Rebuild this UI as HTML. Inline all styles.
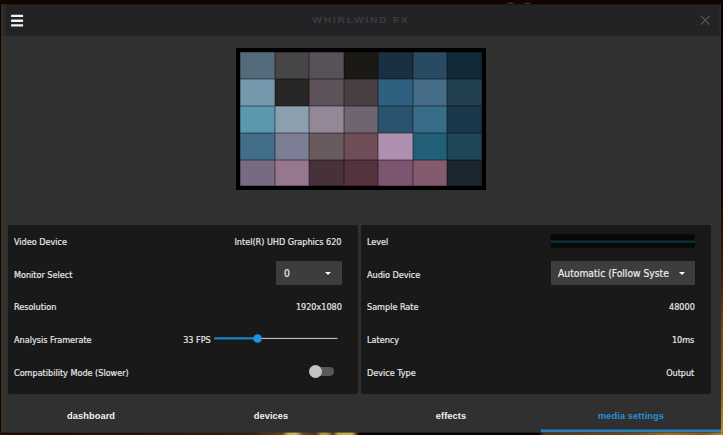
<!DOCTYPE html>
<html>
<head>
<meta charset="utf-8">
<title>Whirlwind FX</title>
<style>
html,body{margin:0;padding:0;}
body{width:723px;height:435px;overflow:hidden;background:#130500;position:relative;
  font-family:"DejaVu Sans Condensed","DejaVu Sans","Liberation Sans",sans-serif;font-stretch:condensed;font-size:9.4px;color:#e8e8e8;}
.abs{position:absolute;}
#wall-left{left:0;top:0;width:2px;height:435px;background:#0b0601;}
#wall-right{left:721px;top:0;width:2px;height:435px;background:linear-gradient(to bottom,#0f0300 0px,#140600 190px,#3a1a06 270px,#7a420e 330px,#96601a 395px,#c0902e 435px);}
#wall-bottom{left:0;top:432px;width:723px;height:3px;background:linear-gradient(to right,#2a0e05 0px,#1e0c05 30px,#2a140a 140px,#34200e 250px,#5a3210 270px,#6a3c12 282px,#c9a648 288px,#d8b850 296px,#70401a 303px,#5a3414 316px,#c09a40 322px,#b08a38 328px,#5a3010 333px,#c8a448 338px,#d0ac4c 352px,#4a2a10 357px,#0c0402 359px,#0c0402 538px,#5a3414 545px,#6e461a 630px,#a8681a 670px,#8a5218 705px,#b88428 723px);}
#win{left:1px;top:4px;width:720px;height:428px;background:#303030;overflow:hidden;}
#hdr{left:0;top:0;width:100%;height:31.7px;background:#232325;}
.bar{position:absolute;left:10px;width:12px;height:2.5px;background:#f4f4f4;border-radius:.5px;}
#title{left:0;width:100%;top:10px;text-align:center;font-family:"Liberation Sans",sans-serif;font-weight:bold;font-size:9px;letter-spacing:1.6px;transform:scaleX(1.13);color:#3c3c40;line-height:12px;}
#grid{left:235px;top:44.4px;width:242px;height:134px;border:4px solid #000;background:#000;display:grid;grid-template-columns:repeat(7,1fr);grid-template-rows:repeat(5,1fr);}
#grid div{box-shadow:inset 0 0 0 .5px rgba(0,0,0,.5);}
.panel{position:absolute;top:221px;width:350px;height:169px;background:#191919;border-radius:2px;}
.lbl,.val,.dd span{-webkit-text-stroke:.2px #e8e8e8;}
.lbl{position:absolute;left:6.3px;white-space:nowrap;line-height:12px;transform:scaleX(.96);transform-origin:left center;}
.val{position:absolute;right:16.3px;white-space:nowrap;line-height:12px;transform:scaleX(.96);transform-origin:right center;text-align:right;}
.dd{position:absolute;background:#3d3d3d;height:23.6px;border-radius:1px;}
.dd span{position:absolute;left:7.6px;top:4.8px;line-height:14px;font-size:10.5px;white-space:nowrap;transform:scaleX(.975);transform-origin:left center;color:#f0f0f0;}
.dd i{position:absolute;top:10.6px;width:0;height:0;border-left:3.7px solid transparent;border-right:3.7px solid transparent;border-top:3.8px solid #fff;}
.tab{position:absolute;top:406px;width:180px;text-align:center;transform:scaleX(1.05);font-family:"Liberation Sans",sans-serif;font-weight:bold;font-size:8.8px;line-height:12px;color:#f2f2f2;letter-spacing:.1px;}
</style>
</head>
<body>
<div id="wall-left" class="abs"></div>
<div class="abs" style="left:506px;top:2px;width:9px;height:3px;background:radial-gradient(ellipse at center,#5a342c 0%,rgba(90,52,44,0) 75%)"></div>
<div class="abs" style="left:523px;top:2px;width:9px;height:3px;background:radial-gradient(ellipse at center,#5a342c 0%,rgba(90,52,44,0) 75%)"></div>
<div id="wall-right" class="abs"></div>
<div id="wall-bottom" class="abs"></div>
<div class="abs" style="left:1px;top:432px;width:720px;height:1px;background:rgba(48,48,48,.6)"></div>
<div class="abs" style="left:541px;top:432px;width:180px;height:1px;background:rgba(42,127,182,.2)"></div>
<div id="win" class="abs">
  <div id="hdr" class="abs">
    <svg class="abs" style="left:8px;top:8px" width="18" height="18" viewBox="0 0 18 18"><rect x="2.1" y="2.7" width="12" height="2.4" rx=".4" fill="#f4f4f4"/><rect x="2.1" y="7.5" width="12" height="2.4" rx=".4" fill="#f4f4f4"/><rect x="2.1" y="12.2" width="12" height="2.4" rx=".4" fill="#f4f4f4"/></svg>
    <div class="abs" style="left:0;top:0;width:100%;height:1px;background:rgba(19,5,0,.45)"></div>
    <div id="title" class="abs">WHIRLWIND FX</div>
    <svg class="abs" style="left:699.2px;top:11.4px" width="10.5" height="10.5" viewBox="0 0 12 12"><path d="M1 1 L11 11 M11 1 L1 11" stroke="#545456" stroke-width="1.6" fill="none"/></svg>
  </div>

  <div id="grid" class="abs">
    <div style="background:#536b7b"></div><div style="background:#474546"></div><div style="background:#57525a"></div><div style="background:#1a1915"></div><div style="background:#1a2f40"></div><div style="background:#284b63"></div><div style="background:#122a38"></div>
    <div style="background:#7499ad"></div><div style="background:#282726"></div><div style="background:#5e525a"></div><div style="background:#4a4043"></div><div style="background:#2f607f"></div><div style="background:#456d88"></div><div style="background:#224050"></div>
    <div style="background:#5b98ad"></div><div style="background:#8c9fae"></div><div style="background:#948898"></div><div style="background:#6f6571"></div><div style="background:#29536f"></div><div style="background:#386c88"></div><div style="background:#1a384b"></div>
    <div style="background:#416e88"></div><div style="background:#7b7e95"></div><div style="background:#695a5d"></div><div style="background:#6e4d57"></div><div style="background:#af8fb0"></div><div style="background:#22607a"></div><div style="background:#1f4558"></div>
    <div style="background:#786a80"></div><div style="background:#977790"></div><div style="background:#47313a"></div><div style="background:#54333d"></div><div style="background:#7c5570"></div><div style="background:#845a6e"></div><div style="background:#1c262f"></div>
  </div>

  <div class="panel" style="left:7px">
    <div class="lbl" style="top:11.2px">Video Device</div>
    <div class="val" style="top:11.2px">Intel(R) UHD Graphics 620</div>
    <div class="lbl" style="top:43.8px">Monitor Select</div>
    <div class="dd" style="left:268px;top:36.2px;width:66px"><span>0</span><i style="left:49.4px"></i></div>
    <div class="lbl" style="top:76.4px">Resolution</div>
    <div class="val" style="top:76.4px">1920x1080</div>
    <div class="lbl" style="top:109px">Analysis Framerate</div>
    <div class="val" style="top:109px;right:147px">33 FPS</div>
    <svg class="abs" style="left:200px;top:107px" width="140" height="13" viewBox="0 0 140 13"><rect x="6.4" y="5.9" width="123.1" height="1" fill="#d4d4d4"/><rect x="6.4" y="5.3" width="43" height="2.2" fill="#1583c8"/><circle cx="49.6" cy="6.5" r="4.3" fill="#1b96e4"/></svg>
    <div class="lbl" style="top:141.6px">Compatibility Mode (Slower)</div>
    <div class="abs" style="left:304px;top:142px;width:22px;height:8.5px;border-radius:4.25px;background:#585858"></div>
    <div class="abs" style="left:301px;top:139.7px;width:13px;height:13px;border-radius:50%;background:#c4c4c4"></div>
  </div>

  <div class="panel" style="left:360px">
    <div class="lbl" style="top:11.2px">Level</div>
    <svg class="abs" style="left:189px;top:8px" width="147" height="17" viewBox="0 0 147 17"><rect x=".5" y="1.4" width="144.4" height="13.3" fill="#070909"/><rect x=".5" y="7.5" width="144.4" height="2.3" fill="#12313f"/></svg>
    <div class="lbl" style="top:43.8px">Audio Device</div>
    <div class="dd" style="left:189.5px;top:36.2px;width:144.3px"><span>Automatic (Follow Syste</span><i style="left:128.4px"></i></div>
    <div class="lbl" style="top:76.4px">Sample Rate</div>
    <div class="val" style="top:76.4px">48000</div>
    <div class="lbl" style="top:109px">Latency</div>
    <div class="val" style="top:109px">10ms</div>
    <div class="lbl" style="top:141.6px">Device Type</div>
    <div class="val" style="top:141.6px">Output</div>
  </div>

  <div class="abs" style="left:0;top:0;width:6px;height:428px;background:linear-gradient(to right,rgba(58,46,34,.75) 0px,rgba(60,50,40,.55) 2px,rgba(56,48,42,.3) 4px,rgba(56,48,42,0) 6px)"></div>
  <div class="abs" style="left:717px;top:0;width:3px;height:428px;background:linear-gradient(to right,rgba(60,50,42,0) 0px,rgba(60,50,42,.5) 3px)"></div>
  <div class="tab" style="left:0px">dashboard</div>
  <div class="tab" style="left:180px">devices</div>
  <div class="tab" style="left:360px">effects</div>
  <div class="tab" style="left:540px;color:#2a8fd2">media settings</div>
  <div class="abs" style="left:540px;top:426px;width:181px;height:2px;background:#2a7fb6"></div>
  <div class="abs" style="left:540px;top:425px;width:181px;height:1px;background:rgba(42,127,182,.5)"></div>
</div>
</body>
</html>
